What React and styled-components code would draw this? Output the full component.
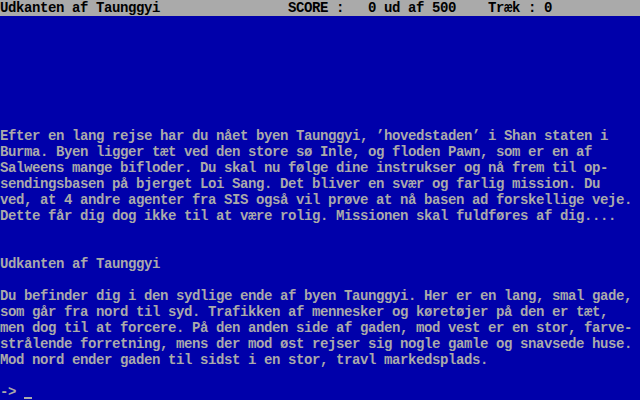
import styled, { createGlobalStyle } from "styled-components";

const colors = {
    blue: "#0000aa",
    gray: "#aaaaaa",
    black: "#000000",
};

const ROW = 16;

const GlobalStyle = createGlobalStyle`
    html, body {
        margin: 0;
        padding: 0;
        background: ${colors.blue};
    }
`;

const Screen = styled.div`
    width: 640px;
    height: 400px;
    display: flex;
    flex-direction: column;
    background: ${colors.blue};
    color: ${colors.gray};
    font-family: "Liberation Mono", "DejaVu Sans Mono", monospace;
    font-size: 14px;
    font-weight: bold;
    letter-spacing: -0.4px;
    line-height: ${ROW}px;
    overflow: hidden;
`;

const StatusBar = styled.div`
    height: ${ROW}px;
    background: ${colors.gray};
    color: ${colors.black};
    white-space: pre;
`;

const Block = styled.div`
    margin-top: ${(p) => p.$skip * ROW}px;
    white-space: pre;
`;

const Line = styled.div`
    height: ${ROW}px;
`;

const Cursor = styled.span`
    display: inline-block;
    width: 8px;
    height: 2px;
    background: ${colors.gray};
    vertical-align: -3px;
`;

const intro = [
    "Efter en lang rejse har du nået byen Taunggyi, ’hovedstaden’ i Shan staten i",
    "Burma. Byen ligger tæt ved den store sø Inle, og floden Pawn, som er en af",
    "Salweens mange bifloder. Du skal nu følge dine instrukser og nå frem til op-",
    "sendingsbasen på bjerget Loi Sang. Det bliver en svær og farlig mission. Du",
    "ved, at 4 andre agenter fra SIS også vil prøve at nå basen ad forskellige veje.",
    "Dette får dig dog ikke til at være rolig. Missionen skal fuldføres af dig....",
];

const room = [
    "Du befinder dig i den sydlige ende af byen Taunggyi. Her er en lang, smal gade,",
    "som går fra nord til syd. Trafikken af mennesker og køretøjer på den er tæt,",
    "men dog til at forcere. På den anden side af gaden, mod vest er en stor, farve-",
    "strålende forretning, mens der mod øst rejser sig nogle gamle og snavsede huse.",
    "Mod nord ender gaden til sidst i en stor, travl markedsplads.",
];

function Paragraph({ skip, lines }) {
    return (
        <Block $skip={skip}>
            {lines.map((line, i) => (
                <Line key={i}>{line}</Line>
            ))}
        </Block>
    );
}

export default function App() {
    const location = "Udkanten af Taunggyi";
    const score = 0;
    const moves = 0;
    const status =
        location.padEnd(36, " ") +
        "SCORE : " +
        String(score).padStart(3, " ") +
        " ud af 500    Træk : " +
        moves;

    return (
        <>
            <GlobalStyle />
            <Screen>
                <StatusBar>{status}</StatusBar>
                <Paragraph skip={7} lines={intro} />
                <Paragraph skip={2} lines={[location]} />
                <Paragraph skip={1} lines={room} />
                <Block $skip={1}>
                    <Line>
                        {"-> "}
                        <Cursor />
                    </Line>
                </Block>
            </Screen>
        </>
    );
}
